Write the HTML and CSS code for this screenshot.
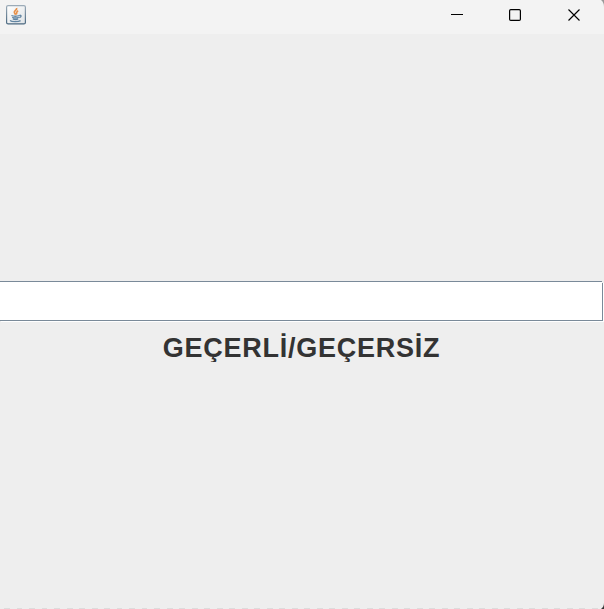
FILE: index.html
```html
<!DOCTYPE html>
<html lang="tr">
<head>
<meta charset="utf-8">
<link rel="stylesheet" href="styles.css">
</head>
<body>
<main class="window">
  <header class="titlebar">
    <svg class="app-icon" width="20" height="20" viewBox="0 0 20 20" fill="none">
      <defs><linearGradient id="g" x2="0" y2="1"><stop stop-color="#9cabb8"/><stop offset="1" stop-color="#49677f"/></linearGradient>
      <linearGradient id="f" x2="1" y2="1"><stop stop-color="#fff"/><stop offset="1" stop-color="#dfe3e6"/></linearGradient></defs>
      <rect x=".6" y=".6" width="18.8" height="18.3" rx="1.5" fill="url(#f)" stroke="url(#g)" stroke-width="1.2"/>
      <path d="M10.6 3C11.3 5.2 7.8 5.7 8.4 7.6c.2.8 1 1.4 1.1 2.2M12.2 5.7C9.7 6.8 11.3 7.8 10.2 9.3" stroke="#e89048" stroke-width="1.7"/>
      <path d="M5.4 10.5c2 .8 6 .7 8.2 0M6.2 12.3c2 .7 4.7.7 6.6 0M6.8 14c1.7.6 3.8.6 5.4 0M13.7 10.3c2-.3 1.8 1.8-.4 2.4M4 15.5c1.8 1.6 8.6 1.4 10.6.1" stroke="#6285a2" stroke-width="1.3"/>
    </svg>
    <div class="controls">
      <svg class="control" width="13" height="14" viewBox="0 0 13 14"><path d="M0 7h12v1H0z" fill="#000"/></svg>
      <svg class="control" width="13" height="14" viewBox="0 0 13 14" fill="none"><rect x=".6" y="2.6" width="10.8" height="10.8" rx="1.2" stroke="#000" stroke-width="1.2"/></svg>
      <svg class="control" width="13" height="14" viewBox="0 0 13 14" fill="none"><path d="M.5 2.5l11 11M11.5 2.5l-11 11" stroke="#000" stroke-width="1.15"/></svg>
    </div>
    <svg class="corner corner-top" width="3" height="7" viewBox="0 0 3 7"><path d="M0 0h3v7C3 4 2 1.5 0 0z" fill="#999"/></svg>
  </header>
  <section class="upper"></section>
  <div class="field"></div>
  <section class="lower"><div class="result">GEÇERLİ/GEÇERSİZ</div></section>
  <div class="edge"></div>
  <svg class="corner corner-bottom" width="3" height="6" viewBox="0 0 3 6"><path d="M3 0v6H0C2 4.5 3 2.5 3 0z" fill="#333"/></svg>
</main>
</body>
</html>
```
FILE: styles.css
```css
body {
  margin: 0;
  background: #eee;
  overflow: hidden;
}

.window {
  position: relative;
  display: flex;
  flex-direction: column;
  width: 604px;
  height: 609px;
  background: #eee;
}

.titlebar {
  display: flex;
  justify-content: space-between;
  align-items: flex-start;
  box-sizing: border-box;
  height: 34px;
  padding: 5px 23px 0 6px;
  background: #f3f3f3;
}

.app-icon,
.control {
  display: block;
}

.controls {
  display: flex;
  gap: 45px;
  padding-top: 2px;
}

.control:last-child {
  margin-left: 1px;
}

.upper {
  height: 247px;
}

.field {
  position: relative;
  box-sizing: border-box;
  height: 40px;
  margin-right: 1px;
  background: #fff;
  border: solid #7a8a99;
  border-width: 1px 1px 1px 0;
  box-shadow: 1px 1px 0 #fff;
}

/* Metal-style notch in the top right corner of the border */
.field::after {
  content: "";
  position: absolute;
  top: -1px;
  right: -2px;
  width: 2px;
  height: 2px;
  background: #eee;
}

.lower {
  flex: 1;
}

.result {
  margin-top: 11px;
  height: 30px;
  overflow: hidden;
  font: bold 27px/33px "Liberation Sans", sans-serif;
  letter-spacing: 0.75px;
  text-align: center;
  color: #333;
  padding-right: 1px;
}

.edge {
  height: 1px;
  background: repeating-linear-gradient(90deg, #eee 0 4px, #dcdcdc 4px 10px, #eee 10px 12.5px);
}

.corner {
  position: absolute;
  right: 0;
}

.corner-top {
  top: 0;
}

.corner-bottom {
  bottom: 0;
}
```
